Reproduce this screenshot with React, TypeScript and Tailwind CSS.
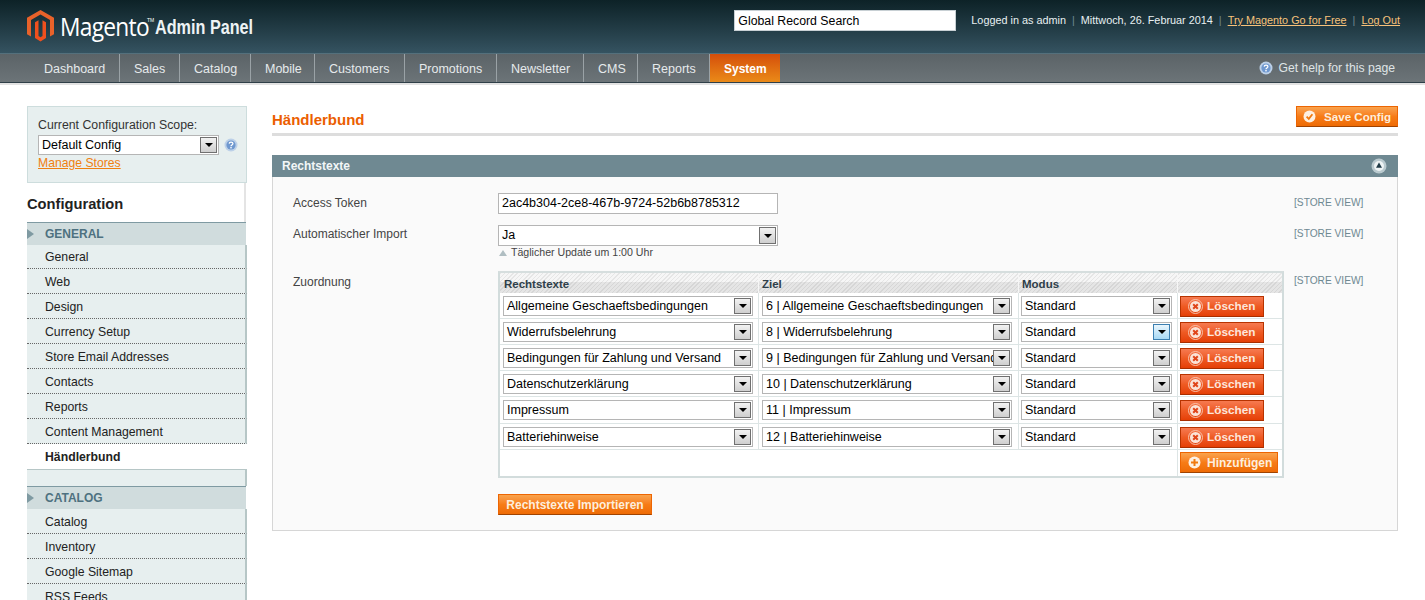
const navItems = [
  { label: 'Dashboard', width: 'w-[90px]' },
  { label: 'Sales', width: 'w-[60px]' },
  { label: 'Catalog', width: 'w-[71px]' },
  { label: 'Mobile', width: 'w-[64px]' },
  { label: 'Customers', width: 'w-[90px]' },
  { label: 'Promotions', width: 'w-[92px]' },
  { label: 'Newsletter', width: 'w-[87px]' },
  { label: 'CMS', width: 'w-[54px]' },
  { label: 'Reports', width: 'w-[71px]' },
]
const generalItems = ['General', 'Web', 'Design', 'Currency Setup', 'Store Email Addresses', 'Contacts', 'Reports', 'Content Management']
const catalogItems = ['Catalog', 'Inventory', 'Google Sitemap', 'RSS Feeds']
const rows = [
  ['Allgemeine Geschaeftsbedingungen', '6 | Allgemeine Geschaeftsbedingungen'],
  ['Widerrufsbelehrung', '8 | Widerrufsbelehrung'],
  ['Bedingungen für Zahlung und Versand', '9 | Bedingungen für Zahlung und Versand'],
  ['Datenschutzerklärung', '10 | Datenschutzerklärung'],
  ['Impressum', '11 | Impressum'],
  ['Batteriehinweise', '12 | Batteriehinweise'],
]

function Logo() {
  return (
    <svg width="27" height="32" viewBox="0 0 27 32" className="shrink-0">
      <path d="M13.5 0 27 7.8v16.4L23 26.5V10L13.5 4.6 4 10v16.5L0 24.2V7.8z" fill="#e8622a" />
      <path d="M8 12.2 11.5 10.2V26l2 1.2 2-1.2V10.2l3.5 2V28l-5.5 3.5L8 28z" fill="#f0501e" />
    </svg>
  )
}

function HelpIcon({ size = 14 }: { size?: number }) {
  return (
    <svg width={size} height={size} viewBox="0 0 14 14" className="shrink-0">
      <circle cx="7" cy="7" r="6.5" fill="#bcd0e8" />
      <circle cx="7" cy="7" r="4.6" fill="#6f98cf" />
      <path d="M5.2 5.6C5.3 3.5 8.9 3.6 8.9 5.6 8.9 7 7 6.9 7 8.2" fill="none" stroke="#fff" strokeWidth="1.3" />
      <rect x="6.3" y="9" width="1.4" height="1.4" fill="#fff" />
    </svg>
  )
}

function SelectBox({ value, className, active }: { value: string; className: string; active?: boolean }) {
  return (
    <div className={`flex items-center bg-white border border-[#b5b5b5] text-black text-[12.5px] pl-[3px] pr-px ${className}`}>
      <span className="flex-1 min-w-0 whitespace-nowrap leading-[16px] pb-px">{value}</span>
      <span
        className={`relative h-[calc(100%-2px)] w-[17px] shrink-0 border flex items-center justify-center ${
          active
            ? 'border-[#3c7fb1] bg-gradient-to-b from-[#eaf6fd] to-[#a7d9f5]'
            : 'border-[#707070] bg-gradient-to-b from-[#f2f2f2] to-[#cfcfcf]'
        }`}
      >
        <span className="w-0 h-0 border-x-[4px] border-x-transparent border-t-[4px] border-t-black" />
      </span>
    </div>
  )
}

function DeleteButton() {
  return (
    <div className="w-[84px] h-[21px] flex items-center pl-[7px] gap-[4px] border border-[#b83300] border-b-[#a82e00] bg-gradient-to-b from-[#f67a50] via-[#ee5a22] to-[#e53f05] text-[11.8px] font-bold text-[#fde6dc]">
      <svg width="15" height="15" viewBox="0 0 15 15" className="shrink-0">
        <circle cx="7.5" cy="7.5" r="7" fill="none" stroke="#f9c0a8" strokeWidth="1" />
        <circle cx="7.5" cy="7.5" r="5.5" fill="#fbe3d8" />
        <path d="M5.2 5.2 9.8 9.8M9.8 5.2 5.2 9.8" stroke="#e0451a" strokeWidth="2" />
      </svg>
      Löschen
    </div>
  )
}

function StoreView() {
  return <span className="text-[10.2px] text-[#6f8992] whitespace-nowrap">[STORE VIEW]</span>
}

function SectionHeader({ title, className }: { title: string; className: string }) {
  return (
    <div className={`flex items-center bg-[#d0dcdd] border-t border-[#7f9aa2] w-[219px] ${className}`}>
      <span className="w-0 h-0 border-y-[5px] border-y-transparent border-l-[7px] border-l-[#7f9aa2]" />
      <span className="ml-[11px] text-[12px] font-bold text-[#4e7180]">{title}</span>
    </div>
  )
}

function SideItem({ label, className = 'h-[25px] pt-[2px]' }: { label: string; className?: string }) {
  return (
    <div className={`flex items-center pl-[18px] bg-[#e7efef] border-r-2 border-r-[#b6c6c6] border-b border-b-[#666] border-dotted [border-right-style:solid] text-[12.25px] text-[#222] w-[220px] ${className}`}>
      {label}
    </div>
  )
}

export default function App() {
  return (
    <div className="h-screen overflow-hidden bg-white font-['Liberation_Sans',Arial,sans-serif]">
      <header className="h-[53px] flex bg-gradient-to-b from-[#0d2227] to-[#355361] relative">
        <div className="flex items-center pl-[27px] pt-[2px] h-[50px]">
          <Logo />
          <span className="ml-[6px] w-[87px] origin-left scale-x-[0.91] font-['Open_Sans',sans-serif] text-[25px] tracking-[-0.8px] text-white leading-none">Magento</span>
          <span className="w-[8px] text-[5px] text-white self-start mt-[15px]">TM</span>
          <span className="mt-[1px] w-[97px] whitespace-nowrap origin-left scale-x-[0.81] font-bold text-[20px] text-[#eef3f4] leading-none">Admin Panel</span>
        </div>
        <div className="ml-auto flex items-start pt-[10px] pr-[25px]">
          <div className="w-[222px] h-[21px] bg-white border border-[#c8d0d4] flex items-center pl-[3px] pt-px text-[12.3px] text-black">Global Record Search</div>
          <div className="ml-[15px] h-[21px] flex items-center text-[10.85px] text-[#e8f0f2] whitespace-nowrap">
            <span>Logged in as admin</span>
            <span className="mx-[6px] text-[#6f8992]">|</span>
            <span>Mittwoch, 26. Februar 2014</span>
            <span className="mx-[6px] text-[#6f8992]">|</span>
            <span className="underline text-[#f7c27a]">Try Magento Go for Free</span>
            <span className="mx-[6px] text-[#6f8992]">|</span>
            <span className="underline text-[#f7c27a]">Log Out</span>
          </div>
        </div>
      </header>

      <nav className="h-[30px] border-t border-[#54707c] border-b border-b-[#2f3f48] bg-gradient-to-b from-[#5b6367] to-[#6c7478] flex items-stretch pl-[30px] pr-[30px]">
        {navItems.map((item, i) => (
          <div
            key={item.label}
            className={`flex items-center pl-[14px] pt-[2px] text-[12.5px] text-[#e6eaec] ${item.width} ${i < navItems.length - 1 ? 'border-r border-r-[#9aa2a6]' : ''}`}
          >
            {item.label}
          </div>
        ))}
        <div className="w-[71px] flex items-center pl-[14px] pt-px border-l border-l-[#9aa2a6] text-[12px] font-bold text-white bg-gradient-to-b from-[#d44d0a] to-[#ea8a18]">System</div>
        <div className="ml-auto flex items-center gap-[5px] text-[12.2px] text-[#dfe4e6]">
          <HelpIcon />
          Get help for this page
        </div>
      </nav>
      <div className="h-[2px] bg-[#e2e2e2]" />

      <div className="flex pt-[21px]">
        <aside className="w-[272px] pl-[27px] shrink-0">
          <div className="w-[220px] h-[77px] bg-[#e7efef] border border-[#cddddd] pl-[10px] pt-[11px]">
            <div className="text-[12.3px] leading-[15px] text-[#333]">Current Configuration Scope:</div>
            <div className="flex items-center gap-[5px] mt-[2px]">
              <SelectBox value="Default Config" className="w-[181px] h-[20px]" />
              <HelpIcon />
            </div>
            <div className="text-[12.2px] leading-[15px] mt-[1px] text-[#f08010] underline">Manage Stores</div>
          </div>
          <div className="w-[219px] h-[39px] flex items-center pt-[3px] border-r-2 border-r-[#e4e4e4] text-[14.7px] font-bold text-[#222]">Configuration</div>
          <SectionHeader title="GENERAL" className="h-[23px]" />
          {generalItems.map((item, i) => (
            <SideItem key={item} label={item} className={i === 0 ? 'h-[24px] pt-px' : 'h-[25px] pt-[2px]'} />
          ))}
          <div className="w-[220px] h-[25px] flex items-center pl-[18px] pt-px text-[12.25px] font-bold text-[#222]">Händlerbund</div>
          <div className="w-[220px] h-[17px] bg-[#e7efef] border-t border-t-[#b6c6c6] border-r-2 border-r-[#b6c6c6]" />
          <SectionHeader title="CATALOG" className="h-[23px]" />
          {catalogItems.map((item) => (
            <SideItem key={item} label={item} />
          ))}
        </aside>

        <main className="w-[1126px]">
          <div className="h-[27px] flex items-start justify-between">
            <h1 className="mt-[3px] text-[15px] font-bold text-[#eb5e00]">Händlerbund</h1>
            <div className="w-[102px] h-[21px] flex items-center pl-[6px] gap-[8px] border border-[#ed6502] border-b-[#a04300] bg-gradient-to-b from-[#f9a34c] via-[#f77c16] to-[#ee6b05] text-[11.6px] font-bold text-[#fdeedd]">
              <svg width="13" height="13" viewBox="0 0 13 13" className="shrink-0">
                <circle cx="6.5" cy="6.5" r="6" fill="#fdf0e2" />
                <path d="M3.6 6.6 5.8 8.8 9.4 4.2" fill="none" stroke="#f07a10" strokeWidth="1.8" />
              </svg>
              Save Config
            </div>
          </div>
          <div className="h-[3px] bg-[#dddddd]" />

          <section className="mt-[19px]">
            <div className="h-[22px] bg-[#6f8992] flex items-center justify-between pl-[10px] pr-[11px] text-[12px] font-bold text-[#f2f6f7]">
              Rechtstexte
              <svg width="16" height="16" viewBox="0 0 16 16">
                <circle cx="8" cy="8" r="7.5" fill="#b9c9ce" />
                <circle cx="8" cy="8" r="5" fill="#eef3f4" />
                <path d="M8 4.6 11 9.8H5z" fill="#1f3a46" />
              </svg>
            </div>
            <div className="h-[354px] bg-[#fafafa] border border-t-0 border-[#d6d6d6] pl-[20px] pt-[16px]">
              <div className="grid grid-cols-[205px_796px_1fr] text-[12px] text-[#444]">
                <div className="h-[21px] flex items-center pb-[2px]">Access Token</div>
                <div className="h-[21px] w-[280px] bg-white border border-[#b5b5b5] flex items-center pl-[3px] text-[12.5px] text-black">2ac4b304-2ce8-467b-9724-52b6b8785312</div>
                <div className="h-[21px] flex items-center pb-[2px]"><StoreView /></div>

                <div className="mt-[11px] h-[21px] flex items-center pb-[4px]">Automatischer Import</div>
                <div className="mt-[11px]">
                  <SelectBox value="Ja" className="w-[280px] h-[21px]" />
                  <div className="flex items-center h-[14px] mb-[1px] pl-[1px] text-[10.6px] text-[#444]">
                    <span className="w-0 h-0 border-x-[4px] border-x-transparent border-b-[6px] border-b-[#b0bec2] mr-[4px]" />
                    Täglicher Update um 1:00 Uhr
                  </div>
                </div>
                <div className="mt-[11px] h-[21px] flex items-center pb-[4px]"><StoreView /></div>

                <div className="mt-[10px] pt-[2px]">Zuordnung</div>
                <div className="mt-[10px]">
                  <div className="w-[786px] bg-white border-2 border-[#d2dcdc] border-t-[#d6dede] border-r-[#d2dcdc]">
                    <div className="grid grid-cols-[259px_260px_159px_1fr] h-[20px] text-[11.5px] font-bold text-[#2f3f4a] bg-[linear-gradient(to_bottom,transparent_45%,rgba(0,0,0,0.07)_45%),repeating-linear-gradient(135deg,#e6e6e6_0,#e6e6e6_1px,#f6f6f6_1px,#f6f6f6_3px)]">
                      {['Rechtstexte', 'Ziel', 'Modus', ''].map((h, i) => (
                        <div key={i} className={`flex items-end pb-px ${i === 0 ? 'pl-[4px]' : 'pl-[3px]'} ${i < 3 ? 'border-r border-r-[#f6f6f6]' : ''}`}>
                          <span className="leading-[15px]">{h}</span>
                        </div>
                      ))}
                    </div>
                    {rows.map(([left, right], i) => (
                      <div key={left} className={`grid grid-cols-[259px_260px_159px_1fr] border-b border-b-[#dde5e5] ${i === 4 ? 'h-[27px]' : 'h-[26px]'}`}>
                        <div className="border-r border-r-[#dde5e5] pl-[3px] pt-[3px]">
                          <SelectBox value={left} className="w-[250px] h-[20px]" />
                        </div>
                        <div className="border-r border-r-[#dde5e5] pl-[3px] pt-[3px]">
                          <SelectBox value={right} className="w-[250px] h-[20px]" />
                        </div>
                        <div className="border-r border-r-[#dde5e5] pl-[2px] pt-[3px]">
                          <SelectBox value="Standard" className="w-[151px] h-[20px]" active={i === 1} />
                        </div>
                        <div className="pl-[2px] pt-[3px]">
                          <DeleteButton />
                        </div>
                      </div>
                    ))}
                    <div className="grid grid-cols-[678px_1fr] h-[26px]">
                      <div className="border-r border-r-[#dde5e5]" />
                      <div className="pl-[2px] pt-[2px]">
                        <div className="w-[98px] h-[21px] flex items-center pl-[7px] gap-[6px] border border-[#ed6502] border-b-[#a04300] bg-gradient-to-b from-[#f9a34c] via-[#f77c16] to-[#ee6b05] text-[12px] font-bold text-[#fdeedd]">
                          <svg width="13" height="13" viewBox="0 0 13 13" className="shrink-0">
                            <circle cx="6.5" cy="6.5" r="6" fill="#fdf0e2" />
                            <path d="M6.5 3v7M3 6.5h7" stroke="#f07a10" strokeWidth="2" />
                          </svg>
                          Hinzufügen
                        </div>
                      </div>
                    </div>
                  </div>
                  <div className="mt-[16px] w-[154px] h-[21px] flex items-center justify-center border border-[#ed6502] border-b-[#a04300] bg-gradient-to-b from-[#f9a34c] via-[#f77c16] to-[#ee6b05] text-[12px] font-bold text-[#fdeedd] whitespace-nowrap">
                    Rechtstexte Importieren
                  </div>
                </div>
                <div className="mt-[10px] pt-[2px] h-[18px] flex items-center"><StoreView /></div>
              </div>
            </div>
          </section>
        </main>
      </div>
    </div>
  )
}
